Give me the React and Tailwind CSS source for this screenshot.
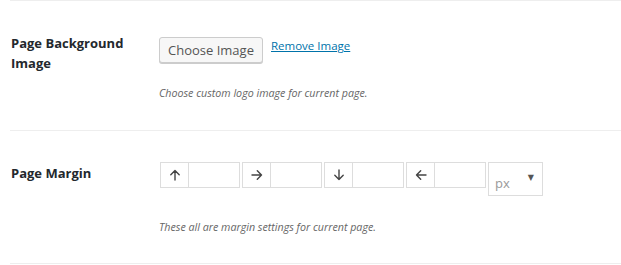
function Arrow({ dir }) {
  const rot = { up: 0, right: 90, down: 180, left: 270 }[dir];
  return (
    <svg width="12" height="12" viewBox="0 0 12 12" style={{ transform: `rotate(${rot}deg)` }}>
      <path d="M6 11V1.5M1.8 5.7L6 1.5L10.2 5.7" fill="none" stroke="#444444" strokeWidth="1.4" strokeLinecap="round" strokeLinejoin="round" />
    </svg>
  );
}

export default function App() {
  const arrows = ["up", "right", "down", "left"];
  return (
    <div className="bg-white w-[621px] h-[265px] overflow-hidden font-['Open_Sans',sans-serif]">
      <div className="ml-[10px] border-t border-[#eeeeee]">
        <div className="flex h-[129px]">
          <div className="w-[149px] pl-[1px] pt-[32px] text-[13px] leading-[20px] font-bold text-[#23282d]">
            Page Background Image
          </div>
          <div className="pt-[36px]">
            <div className="flex items-start">
              <button className="h-[26px] w-[104px] rounded-[3px] border border-[#cccccc] bg-[#f7f7f7] shadow-[0_1px_0_#cccccc] text-[13px] text-[#555555] leading-[24px]">
                Choose Image
              </button>
              <a href="#" className="ml-[8px] mt-[1px] text-[11.5px] leading-[16px] text-[#0073aa] underline">
                Remove Image
              </a>
            </div>
            <p className="mt-[22px] text-[10.7px] italic text-[#666666] leading-[16px]">
              Choose custom logo image for current page.
            </p>
          </div>
        </div>
      </div>
      <div className="ml-[10px] border-t border-[#eeeeee]">
        <div className="flex h-[132px]">
          <div className="w-[149px] pl-[1px] pt-[32px] text-[13px] leading-[20px] font-bold text-[#23282d]">
            Page Margin
          </div>
          <div className="pt-[31px]">
            <div className="flex items-start gap-[2px]">
              {arrows.map((a) => (
                <div key={a} className="flex h-[26px] border border-[#dddddd] first:ml-[1px]">
                  <div className="w-[28px] flex items-center justify-center border-r border-[#dddddd]">
                    <Arrow dir={a} />
                  </div>
                  <div className="w-[50px]" />
                </div>
              ))}
              <div className="relative h-[34px] w-[55px] border border-[#dddddd]">
                <span className="absolute left-[6px] top-[10px] text-[13px] text-[#999999] leading-[20px]">px</span>
                <span className="absolute right-[8px] top-[9px] text-[8px] text-[#555555] font-['DejaVu_Sans',sans-serif]">▼</span>
              </div>
            </div>
            <p className="mt-[23px] text-[10.7px] italic text-[#666666] leading-[16px]">
              These all are margin settings for current page.
            </p>
          </div>
        </div>
      </div>
      <div className="ml-[10px] border-t border-[#eeeeee]" />
    </div>
  );
}
